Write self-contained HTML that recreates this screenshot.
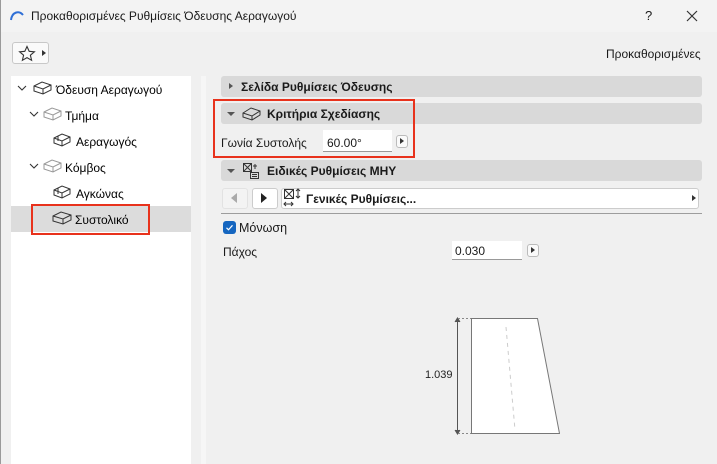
<!DOCTYPE html>
<html><head><meta charset="utf-8"><style>
*{box-sizing:border-box;margin:0;padding:0}
body{width:717px;height:464px;overflow:hidden;background:#f0f0f0;font-family:"Liberation Sans",sans-serif;font-size:12px;color:#1a1a1a;position:relative}
.a{position:absolute}
.t{position:absolute;white-space:nowrap}
.hdr{position:absolute;left:221px;width:481px;height:21px;background:#d9d9d9;border-radius:3px}
.hdr b{position:absolute;top:4px;font-size:12px}
.tri{position:absolute;width:0;height:0}
</style></head><body>
<div class="a" style="left:0;top:0;width:1px;height:464px;background:#9a9a9a"></div>
<div class="a" style="left:1px;top:0;width:716px;height:32px;background:#f3f3f3"></div>
<svg class="a" style="left:10px;top:9px" width="14" height="12"><path d="M1 11 C2 3 9 1 13 6" stroke="#2f6fd6" stroke-width="2" fill="none"/></svg>
<div class="t" style="left:31px;top:9px;font-size:12px">Προκαθορισμένες Ρυθμίσεις Όδευσης Αεραγωγού</div>
<div class="t" style="left:645px;top:8px;font-size:13px">?</div>
<svg class="a" style="left:686px;top:10px" width="12" height="12"><path d="M1 1L11 11M11 1L1 11" stroke="#333" stroke-width="1.2"/></svg>
<div class="a" style="left:12px;top:42px;width:37px;height:22px;background:#fafafa;border:1px solid #c8c8c8;border-radius:3px"></div>
<svg class="a" style="left:18px;top:45px" width="18" height="17"><path d="M9 1.5L11.2 6.3 16.4 6.8 12.4 10.2 13.6 15.3 9 12.6 4.4 15.3 5.6 10.2 1.6 6.8 6.8 6.3Z" fill="none" stroke="#333" stroke-width="1.1"/></svg>
<div class="tri" style="left:42px;top:50px;border-left:4px solid #333;border-top:3.5px solid transparent;border-bottom:3.5px solid transparent"></div>
<div class="t" style="left:606px;top:47px">Προκαθορισμένες</div>
<div class="a" style="left:11px;top:76px;width:180px;height:388px;background:#fff"></div>
<div class="a" style="left:201px;top:76px;width:5px;height:388px;background:#f6f6f6"></div>
<div class="a" style="left:11px;top:206px;width:180px;height:26px;background:#dcdcdc"></div>
<svg class="a" style="left:0;top:76px" width="191" height="160" font-family="Liberation Sans" font-size="12">
<g fill="none" stroke="#333" stroke-width="1.1">
<path d="M18 10l4 4 4-4"/><path d="M30 36l4 4 4-4"/><path d="M30 88l4 4 4-4"/>
</g>
<g fill="none" stroke="#333" stroke-width="1"><path d="M34 10l8-4 9 3v5l-8 4-9-3z M34 10l9 3 8-4 M43 13v5"/></g>
<g fill="none" stroke="#999" stroke-width="1"><path d="M44 36l8-4 9 3v5l-8 4-9-3z M44 36l9 3 8-4 M53 39v5"/>
<path d="M44 88l8-4 9 3v5l-8 4-9-3z M44 88l9 3 8-4 M53 91v5"/></g>
<g fill="none" stroke="#333" stroke-width="1"><path d="M54 62l8-4 8 3v5l-8 4-8-3z M54 62l8 3 8-4 M62 65v5 M58 60v5"/>
<path d="M54 114l8-4 8 3v5l-8 4-8-3z M54 114l8 3 8-4 M62 117v5 M58 112v6"/>
<path d="M53 140l8-4 10 3v5l-8 4-10-3z M53 140l10 3 8-4 M63 143v5"/></g>
<text x="56" y="18">Όδευση Αεραγωγού</text>
<text x="65" y="44">Τμήμα</text>
<text x="76" y="70">Αεραγωγός</text>
<text x="65" y="96">Κόμβος</text>
<text x="76" y="122">Αγκώνας</text>
<text x="75" y="148">Συστολικό</text>
</svg>
<div class="a" style="left:31px;top:204px;width:119px;height:31px;border:2px solid #e8321c"></div>
<div class="hdr" style="top:76px"><div class="tri" style="left:8px;top:7px;border-left:4px solid #555;border-top:3.5px solid transparent;border-bottom:3.5px solid transparent"></div><b style="left:20px">Σελίδα Ρυθμίσεις Όδευσης</b></div>
<div class="hdr" style="top:103px"><div class="tri" style="left:6px;top:9px;border-top:4px solid #555;border-left:4px solid transparent;border-right:4px solid transparent"></div>
<svg class="a" style="left:21px;top:3px" width="20" height="15"><path d="M1 7l8-5 9 3v4l-8 5-9-3z M1 7l9 3 8-5 M10 10v4" fill="none" stroke="#333" stroke-width="1"/></svg><b style="left:46px">Κριτήρια Σχεδίασης</b></div>
<div class="t" style="left:221px;top:136px">Γωνία Συστολής</div>
<div class="a" style="left:323px;top:130px;width:69px;height:22px;background:#fff;border-bottom:1px solid #999"></div>
<div class="t" style="left:327px;top:136px">60.00°</div>
<div class="a" style="left:396px;top:135px;width:12px;height:13px;background:#fafafa;border:1px solid #bbb;border-radius:3px"></div>
<div class="tri" style="left:400px;top:138px;border-left:4px solid #333;border-top:3.5px solid transparent;border-bottom:3.5px solid transparent"></div>
<div class="a" style="left:213px;top:99px;width:202px;height:59px;border:2px solid #e8321c"></div>
<div class="hdr" style="top:160px"><div class="tri" style="left:6px;top:9px;border-top:4px solid #555;border-left:4px solid transparent;border-right:4px solid transparent"></div>
<svg class="a" style="left:21px;top:2px" width="18" height="18"><g fill="none" stroke="#333" stroke-width="1"><rect x="1.5" y="1.5" width="8" height="8"/><path d="M1.5 1.5l8 8M9.5 1.5l-8 8"/><rect x="8.5" y="10.5" width="8" height="6"/><path d="M10 12.5h5M10 14.5h5M13 2v5M11 4h4"/></g></svg><b style="left:46px">Ειδικές Ρυθμίσεις ΜΗΥ</b></div>
<div class="a" style="left:222px;top:188px;width:26px;height:21px;background:#f3f3f3;border:1px solid #e2e2e2;border-radius:3px"></div>
<div class="tri" style="left:231px;top:193px;border-right:6px solid #aaa;border-top:5.5px solid transparent;border-bottom:5.5px solid transparent"></div>
<div class="a" style="left:252px;top:188px;width:26px;height:21px;background:#fff;border:1px solid #ccc;border-radius:3px"></div>
<div class="tri" style="left:261px;top:193px;border-left:6px solid #222;border-top:5.5px solid transparent;border-bottom:5.5px solid transparent"></div>
<div class="a" style="left:281px;top:188px;width:418px;height:21px;background:#fff;border:1px solid #ccc;border-radius:3px"></div>
<svg class="a" style="left:283px;top:188px" width="20" height="20"><g fill="none" stroke="#333" stroke-width="1"><rect x="1.5" y="1.5" width="9" height="9"/><path d="M1.5 1.5l9 9M10.5 1.5l-9 9M15 1v9M13 3l2-2 2 2M13 8l2 2 2-2M1 16h9M3 14l-2 2 2 2M8 14l2 2-2 2"/></g></svg>
<div class="t" style="left:306px;top:192px;font-weight:bold">Γενικές Ρυθμίσεις...</div>
<div class="tri" style="left:692px;top:195px;border-left:4px solid #333;border-top:3.5px solid transparent;border-bottom:3.5px solid transparent"></div>
<div class="a" style="left:221px;top:213px;width:481px;height:1px;background:#9d9d9d"></div>
<div class="a" style="left:223px;top:221px;width:13px;height:13px;background:#1566c0;border-radius:3px"></div>
<svg class="a" style="left:223px;top:221px" width="13" height="13"><path d="M3.5 6.8l2 2 4-4.5" stroke="#fff" stroke-width="1.2" fill="none"/></svg>
<div class="t" style="left:239px;top:221px;font-size:12.5px">Μόνωση</div>
<div class="t" style="left:223px;top:245px">Πάχος</div>
<div class="a" style="left:452px;top:241px;width:70px;height:19px;background:#fff;border-bottom:1px solid #999"></div>
<div class="t" style="left:455px;top:244px">0.030</div>
<div class="a" style="left:527px;top:244px;width:12px;height:13px;background:#fafafa;border:1px solid #bbb;border-radius:3px"></div>
<div class="tri" style="left:531px;top:247px;border-left:4px solid #333;border-top:3.5px solid transparent;border-bottom:3.5px solid transparent"></div>
<svg class="a" style="left:400px;top:300px" width="160" height="164" font-family="Liberation Sans" font-size="11">
<path d="M71.5 18.5H137.5L159.5 133.5H71.5Z" fill="#fff" stroke="#777"/>
<path d="M106 27L115 130" stroke="#ccc" stroke-dasharray="4 4"/>
<path d="M57.5 18.5V133.5" stroke="#555"/>
<path d="M55 22l2.5-4 2.5 4M55 130l2.5 4 2.5-4" stroke="#555" fill="#555"/>
<path d="M58 18.5H71M58 133.5H71" stroke="#888" stroke-dasharray="2 2"/>
<text x="25" y="78" fill="#222">1.039</text>
</svg>
</body></html>
